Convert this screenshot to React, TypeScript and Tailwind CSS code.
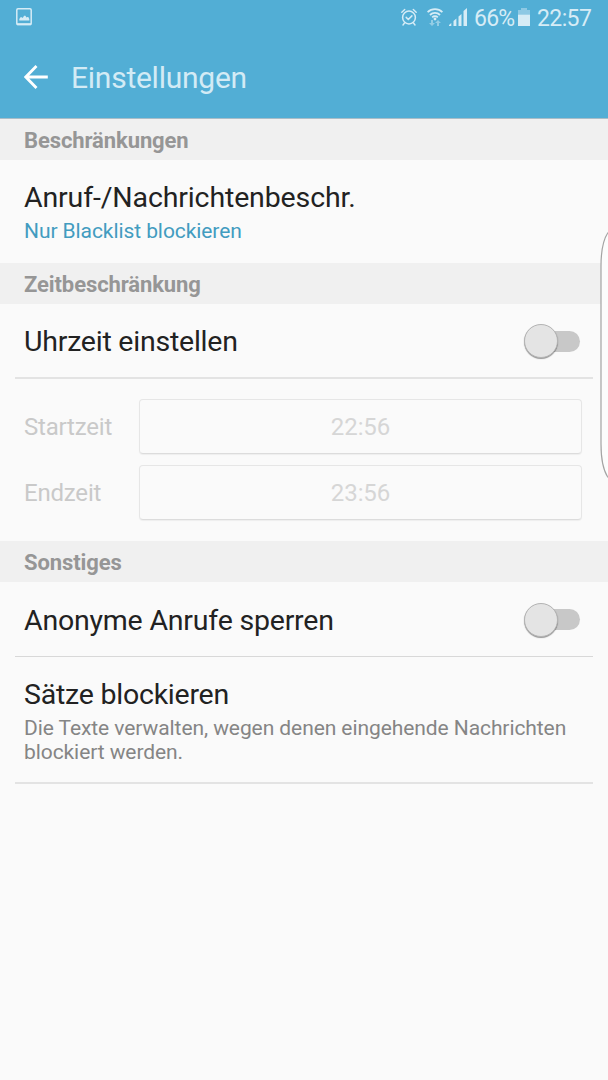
import React, { useState } from 'react';

interface SwitchProps {
  checked: boolean;
  onChange: (checked: boolean) => void;
  label: string;
}

const Switch: React.FC<SwitchProps> = ({ checked, onChange, label }) => (
  <button
    type="button"
    role="switch"
    aria-checked={checked}
    aria-label={label}
    onClick={() => onChange(!checked)}
    className={`mt-px flex h-[34px] w-14 items-center ${checked ? 'flex-row-reverse' : ''}`}
  >
    <span className="z-10 h-[34px] w-[34px] shrink-0 rounded-full border border-[#b4b4b4] bg-[#e4e4e4] shadow-[0_1px_1px_rgba(0,0,0,0.4)]" />
    <span className={`-ml-4 h-[21px] flex-1 rounded-full ${checked ? 'bg-[#52aed5]' : 'bg-[#c8c8c8]'}`} />
  </button>
);

const SectionHeader: React.FC<{ title: string }> = ({ title }) => (
  <h2 className="h-[41px] bg-[#f0f0f0] px-6 text-[22px] leading-[43px] font-bold tracking-[-0.1px] text-[#969696]">
    {title}
  </h2>
);

interface TimeFieldProps {
  label: string;
  value: string;
}

const TimeField: React.FC<TimeFieldProps> = ({ label, value }) => (
  <div className="flex h-[55px] items-center">
    <span className="mt-px w-[115px] text-[24px] tracking-[-0.2px] text-[#c9c9c9]">{label}</span>
    <button
      type="button"
      disabled
      className="h-full flex-1 rounded-[4px] border border-[#e6e6e6] border-b-[#dcdcdc] pt-px text-[24px] tracking-[-0.1px] text-[#d6d6d6] shadow-[0_1px_1px_rgba(0,0,0,0.05)]"
    >
      {value}
    </button>
  </div>
);

const StatusBar: React.FC = () => (
  <div className="flex h-9 items-center pr-4 pl-4 text-[#d6ecf6]">
    <svg width="16" height="18" viewBox="0 0 16 18" className="-mt-0.5">
      <rect x="0.8" y="0.8" width="14.4" height="15.8" rx="1.2" fill="none" stroke="currentColor" strokeWidth="1.5" />
      <path d="M1 15.2h14v2H1z" fill="currentColor" />
      <path d="M3.3 12.5V11l1.2-1.8h1.3L6.7 10l1.4-2.3h1.3L10.5 9.5l1-.5h.8l1 2v1.5z" fill="currentColor" />
    </svg>
    <div className="ml-auto flex h-full items-center">
      <svg width="16" height="19" viewBox="0 0 16 19" fill="none" stroke="currentColor" className="-mt-0.5" strokeLinecap="round">
        <circle cx="8" cy="9.5" r="6.4" strokeWidth="1.5" />
        <path d="M5.2 9.4l2.1 2.1 3.6-3.6" strokeWidth="1.5" />
        <path d="M.8 4.2L3.7 1.4M15.2 4.2L12.3 1.4M3.5 15l-1.5 2M12.5 15l1.5 2" strokeWidth="1.4" />
      </svg>
      <svg width="16" height="18" viewBox="0 0 16 18" fill="none" stroke="currentColor" className="-mt-0.5 ml-2.5">
        <path d="M.6 4.2a10.5 10.5 0 0 1 14.8 0M3 7a7 7 0 0 1 10 0M5.2 9.4a4 4 0 0 1 5.6 0" strokeWidth="1.8" />
        <circle cx="8" cy="11" r="1.4" fill="currentColor" stroke="none" />
        <path d="M4 12v3H2l3 3 3-3H6v-3zM10 18v-3H8l3-3 3 3h-2v3z" fill="currentColor" stroke="none" opacity="0.5" />
      </svg>
      <svg width="18" height="18" viewBox="0 0 18 18" fill="currentColor" className="-mt-0.5 ml-1.5">
        <path d="M0 18v-1l2.3-2v3zM4.5 18v-5l2.9-2.500V18zM9.500 18V8.500L12.500 6v12zM14.500 18V3L18 0v18z" />
      </svg>
      <span className="mt-0.5 ml-[7px] w-10 text-[23px] leading-9 tracking-[-0.8px]">66%</span>
      <svg width="12" height="18" viewBox="0 0 12 18" fill="currentColor" className="-mt-0.5 ml-1">
        <path d="M3 0h6v2h3v5H0V2h3z" opacity="0.45" />
        <path d="M0 6.7h12V18H0z" />
      </svg>
      <span className="mt-0.5 ml-[7px] w-[55px] text-[23px] leading-9 tracking-[-0.6px]">22:57</span>
    </div>
  </div>
);

const App: React.FC = () => {
  const [timeEnabled, setTimeEnabled] = useState(false);
  const [blockAnonymous, setBlockAnonymous] = useState(false);

  return (
    <div className="relative h-[1080px] w-[608px] overflow-hidden bg-[#fafafa] font-['Roboto',sans-serif] text-[#222222]">
      <header className="h-[119px] border-b border-[#a9bdc8] bg-[#52aed5]">
        <StatusBar />
        <div className="flex h-[82px] items-center pl-6">
          <svg width="24" height="24" viewBox="0 0 24 24" fill="none" stroke="#fff" strokeWidth="2.8">
            <path d="M23.8 12H2M12.5 1L1.8 12l10.7 11" />
          </svg>
          <h1 className="ml-[23px] text-[30px] tracking-[-0.25px] text-[#d3ebf5]">Einstellungen</h1>
        </div>
      </header>

      <main>
        <SectionHeader title="Beschränkungen" />
        <div className="h-[103px] px-6 pt-5">
          <p className="text-[28.5px] leading-9 tracking-[-0.13px]">Anruf-/Nachrichtenbeschr.</p>
          <p className="mt-[3px] text-[21px] leading-6 tracking-[-0.08px] text-[#429cc0]">Nur Blacklist blockieren</p>
        </div>

        <SectionHeader title="Zeitbeschränkung" />
        <div className="mx-[15px] flex h-[75px] items-center justify-between border-b-2 border-[#e3e3e3] pr-[13px] pl-[9px]">
          <span className="mt-1 text-[28.5px] tracking-[-0.23px]">Uhrzeit einstellen</span>
          <Switch checked={timeEnabled} onChange={setTimeEnabled} label="Uhrzeit einstellen" />
        </div>
        <div className="flex h-[162px] flex-col gap-[11px] pt-5 pr-[26px] pl-6">
          <TimeField label="Startzeit" value="22:56" />
          <TimeField label="Endzeit" value="23:56" />
        </div>

        <SectionHeader title="Sonstiges" />
        <div className="mx-[15px] flex h-[75px] items-center justify-between border-b border-[#d8d8d8] pr-[13px] pl-[9px]">
          <span className="mt-1 text-[28.5px] tracking-[-0.2px]">Anonyme Anrufe sperren</span>
          <Switch checked={blockAnonymous} onChange={setBlockAnonymous} label="Anonyme Anrufe sperren" />
        </div>
        <div className="mx-[15px] h-[127px] border-b-2 border-[#e3e3e3] pt-5 pl-[9px]">
          <p className="text-[28.5px] leading-9 tracking-[-0.23px]">Sätze blockieren</p>
          <p className="mt-[3px] w-[560px] text-[21px] leading-6 tracking-[-0.08px] text-[#858585]">
            Die Texte verwalten, wegen denen eingehende Nachrichten blockiert werden.
          </p>
        </div>
      </main>

      {/* Edge panel handle */}
      <svg width="8" height="246" viewBox="0 0 8 246" className="absolute top-[232px] right-0">
        <path d="M8 .5C3 8 1 18 1 34v178c0 16 2 26 7 33.5" fill="#fcfcfc" stroke="#a3a3a3" strokeWidth="1.2" />
      </svg>
    </div>
  );
};

export default App;
